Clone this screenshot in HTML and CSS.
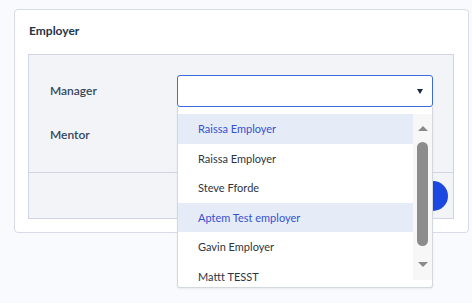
FILE: index.html
```html
<!DOCTYPE html>
<html lang="en">
    <head>
        <meta charset="UTF-8" />
        <meta name="viewport" content="width=device-width, initial-scale=1.0" />
        <title>Employer</title>
        <link rel="stylesheet" href="styles.css">
    </head>
    <body>
        <section class="card">
            <h3 class="card-title">Employer</h3>
            <div class="panel">
                <div class="panel-body">
                    <div class="field">
                        <label class="field-label">Manager</label>
                        <div class="select-wrap">
                            <div class="select is-open">
                                <span class="select-arrow"></span>
                            </div>
                            <div class="dropdown">
                                <div class="dropdown-scroll">
                                    <ul class="options">
                                        <li class="option is-active">Raissa Employer</li>
                                        <li class="option">Raissa Employer</li>
                                        <li class="option">Steve Fforde</li>
                                        <li class="option is-active">Aptem Test employer</li>
                                        <li class="option">Gavin Employer</li>
                                        <li class="option">Mattt TESST</li>
                                    </ul>
                                    <div class="scrollbar">
                                        <span class="scroll-up"></span>
                                        <span class="scroll-thumb"></span>
                                        <span class="scroll-down"></span>
                                    </div>
                                </div>
                            </div>
                        </div>
                    </div>
                    <div class="field">
                        <label class="field-label">Mentor</label>
                        <div class="select-wrap">
                            <div class="select">
                                <span class="select-arrow"></span>
                            </div>
                        </div>
                    </div>
                </div>
                <div class="panel-footer">
                    <button class="btn-save">Save</button>
                </div>
            </div>
        </section>
    </body>
</html>
```

FILE: styles.css
```css
* {
    margin: 0;
    box-sizing: border-box;
}

html {
    height: 100%;
}

body {
    margin: 0;
    min-height: 100%;
    padding: 9px 4px 0 14px;
    background-color: #f9fafd;
    font-family: Lato, 'Noto Sans', sans-serif;
    font-size: 12px;
    color: #2c3542;
}

.card {
    width: 455px;
    padding: 13px 14px 13px 13px;
    background-color: #fff;
    border: 1px solid #d6dbe5;
    border-radius: 4px;
}

.card-title {
    font-size: 12px;
    line-height: 16px;
    font-weight: 700;
    color: #1e3448;
    padding-left: 1px;
    margin-bottom: 15px;
}

.panel {
    background-color: #f2f4f8;
    border: 1px solid #cfd5e4;
}

.panel-body {
    display: flex;
    flex-direction: column;
    gap: 12px;
    padding: 20px 19px 21px 21px;
}

.field {
    display: flex;
    align-items: center;
}

.field-label {
    width: 127px;
    font-weight: 600;
    color: #35475a;
    line-height: 16px;
    margin-top: -1px;
}

.select-wrap {
    position: relative;
    width: 256px;
}

.select {
    height: 32px;
    display: flex;
    align-items: center;
    justify-content: flex-end;
    padding-right: 9px;
    background-color: #fff;
    border: 1px solid #d3d8e2;
    border-radius: 3px;
}

.select.is-open {
    border-color: #3d6be0;
}

.select-arrow {
    width: 0;
    height: 0;
    border-left: 3.5px solid transparent;
    border-right: 3.5px solid transparent;
    border-top: 5px solid #1b2b44;
}

.panel-footer {
    height: 46px;
    display: flex;
    align-items: center;
    justify-content: flex-end;
    padding-right: 5px;
    border-top: 1px solid #cfd5e4;
}

.btn-save {
    height: 30px;
    padding: 0 24px;
    border: none;
    border-radius: 15px;
    background-color: #1b48e0;
    color: #fff;
    font-family: inherit;
    font-weight: 700;
}

.dropdown {
    position: absolute;
    top: 100%;
    left: 0;
    width: 256px;
    padding-top: 7px;
    background-color: #fff;
    border: 1px solid #d3d7de;
    border-top: none;
    border-radius: 0 0 3px 3px;
    box-shadow: 0 1px 2px rgba(40, 50, 70, 0.08);
    z-index: 2;
}

.dropdown-scroll {
    display: flex;
    align-items: flex-start;
    height: 173px;
    overflow: hidden;
}

.options {
    flex: 1;
    list-style: none;
    padding: 0;
}

.option {
    height: 29.5px;
    line-height: 29.5px;
    padding-left: 20px;
    font-size: 11px;
    color: #2c3542;
    white-space: nowrap;
}

.option.is-active {
    background-color: #e6ebf8;
    color: #3552cf;
}

.scrollbar {
    width: 19px;
    height: 166px;
    display: flex;
    flex-direction: column;
    align-items: center;
    padding-top: 12px;
    background-color: #f7f7f8;
}

.scroll-up,
.scroll-down {
    width: 0;
    height: 0;
    border-left: 5.5px solid transparent;
    border-right: 5.5px solid transparent;
}

.scroll-up {
    border-bottom: 5px solid #8a8a8a;
}

.scroll-down {
    border-top: 5px solid #8a8a8a;
}

.scroll-thumb {
    width: 11px;
    height: 104px;
    margin: 11px 0 16px;
    border-radius: 6px;
    background-color: #8c8c8c;
}
```
